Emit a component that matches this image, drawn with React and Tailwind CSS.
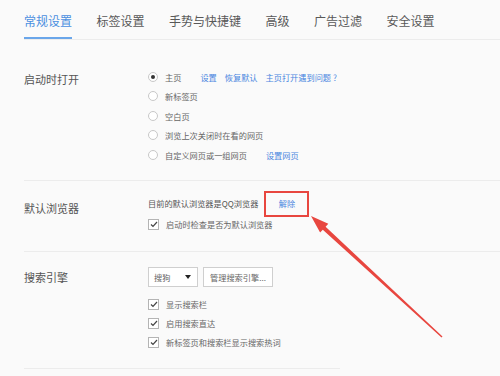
import React from 'react';

const font = {fontFamily: '"Noto Sans CJK SC", "Noto Sans", sans-serif'};

const tabs = ['常规设置', '标签设置', '手势与快捷键', '高级', '广告过滤', '安全设置'];

// Small radio button
const Radio = ({checked}) => (
    <span className="w-[10px] h-[10px] rounded-full border border-[#c8c8c8] bg-white flex items-center justify-center mr-[7px] shrink-0">
        {checked && <span className="w-[4px] h-[4px] rounded-full bg-[#333]"/>}
    </span>
);

// Small checkbox
const Check = () => (
    <span className="w-[11px] h-[11px] border border-[#b4b4b4] bg-white flex items-center justify-center mr-[7px] shrink-0">
        <svg width="8" height="7" viewBox="0 0 8 7">
            <path d="M1 3.5 L3 5.5 L7 1" fill="none" stroke="#444" strokeWidth="1.2"/>
        </svg>
    </span>
);

const Link = ({children, className = ''}) => (
    <span className={`text-[#4a86e0] ${className}`}>{children}</span>
);

const App = () => {
    return (
        <div className="relative w-[500px] h-[376px] overflow-hidden bg-[#fafafa] text-[#666]" style={font}>
            {/* Tabs */}
            <div className="ml-[24px] flex gap-[24.5px] border-b border-[#ececec] h-[40px] items-end">
                {tabs.map((t, i) => (
                    <div
                        key={t}
                        className={`text-[12px] leading-[16px] pb-[8px] ${i === 0 ? 'text-[#4a8fe0] border-b-2 border-[#6aa6ea]' : 'text-[#585858] border-b-2 border-transparent'}`}
                    >
                        {t}
                    </div>
                ))}
            </div>

            {/* 启动时打开 */}
            <div className="ml-[24px] flex border-b border-[#ececec] h-[141px]">
                <div className="w-[124px] text-[11px] leading-[16px] mt-[31px] text-[#555]">启动时打开</div>
                <div className="pt-[27px] text-[8.2px]">
                    <div className="h-[19.5px] flex items-center">
                        <Radio checked/>
                        <span>主页</span>
                        <Link className="ml-[19px]">设置</Link>
                        <Link className="ml-[8px]">恢复默认</Link>
                        <Link className="ml-[8px]">主页打开遇到问题 ?</Link>
                    </div>
                    <div className="h-[19.5px] flex items-center"><Radio/><span>新标签页</span></div>
                    <div className="h-[19.5px] flex items-center"><Radio/><span>空白页</span></div>
                    <div className="h-[19.5px] flex items-center"><Radio/><span>浏览上次关闭时在看的网页</span></div>
                    <div className="h-[19.5px] flex items-center">
                        <Radio/>
                        <span>自定义网页或一组网页</span>
                        <Link className="ml-[19px]">设置网页</Link>
                    </div>
                </div>
            </div>

            {/* 默认浏览器 */}
            <div className="ml-[24px] flex border-b border-[#ececec] h-[71px]">
                <div className="w-[124px] text-[11px] leading-[16px] mt-[19px] text-[#555]">默认浏览器</div>
                <div className="pt-[12px] text-[8.2px]">
                    <div className="h-[21px] flex items-center">
                        <span className="text-[#555]">目前的默认浏览器是QQ浏览器</span>
                        <span className="ml-[6px] border-2 border-[#e8463f] w-[45px] h-[26px] flex items-center justify-center">
                            <Link>解除</Link>
                        </span>
                    </div>
                    <div className="h-[21px] flex items-center"><Check/><span>启动时检查是否为默认浏览器</span></div>
                </div>
            </div>

            {/* 搜索引擎 */}
            <div className="ml-[24px] flex h-[116px]">
                <div className="w-[124px] text-[11px] leading-[16px] mt-[17px] text-[#555]">搜索引擎</div>
                <div className="pt-[15px] text-[8.2px]">
                    <div className="flex gap-[5px] h-[20px]">
                        <div className="w-[50px] h-[20px] border border-[#cfcfcf] bg-white flex items-center justify-between pl-[5px] pr-[6px]">
                            <span>搜狗</span>
                            <svg width="6" height="4" viewBox="0 0 6 4"><path d="M0 0 H6 L3 4 Z" fill="#222"/></svg>
                        </div>
                        <div className="w-[70px] h-[20px] border border-[#cfcfcf] bg-white flex items-center justify-center">
                            管理搜索引擎...
                        </div>
                    </div>
                    <div className="mt-[7.5px]">
                        <div className="h-[19px] flex items-center"><Check/><span>显示搜索栏</span></div>
                        <div className="h-[19px] flex items-center"><Check/><span>启用搜索直达</span></div>
                        <div className="h-[19px] flex items-center"><Check/><span>新标签页和搜索栏显示搜索热词</span></div>
                    </div>
                </div>
            </div>
            <div className="ml-[24px] w-[316px] border-b border-[#ececec]"/>

            {/* Red annotation arrow */}
            <svg className="absolute left-0 top-0" width="500" height="376" viewBox="0 0 500 376">
                <polygon
                    points="311,216 328.3,223.8 325.6,226.7 442.5,336.4 441.5,337.6 322.8,229.7 320.1,232.6"
                    fill="#e8463f"
                />
            </svg>
        </div>
    );
};

export default App;
